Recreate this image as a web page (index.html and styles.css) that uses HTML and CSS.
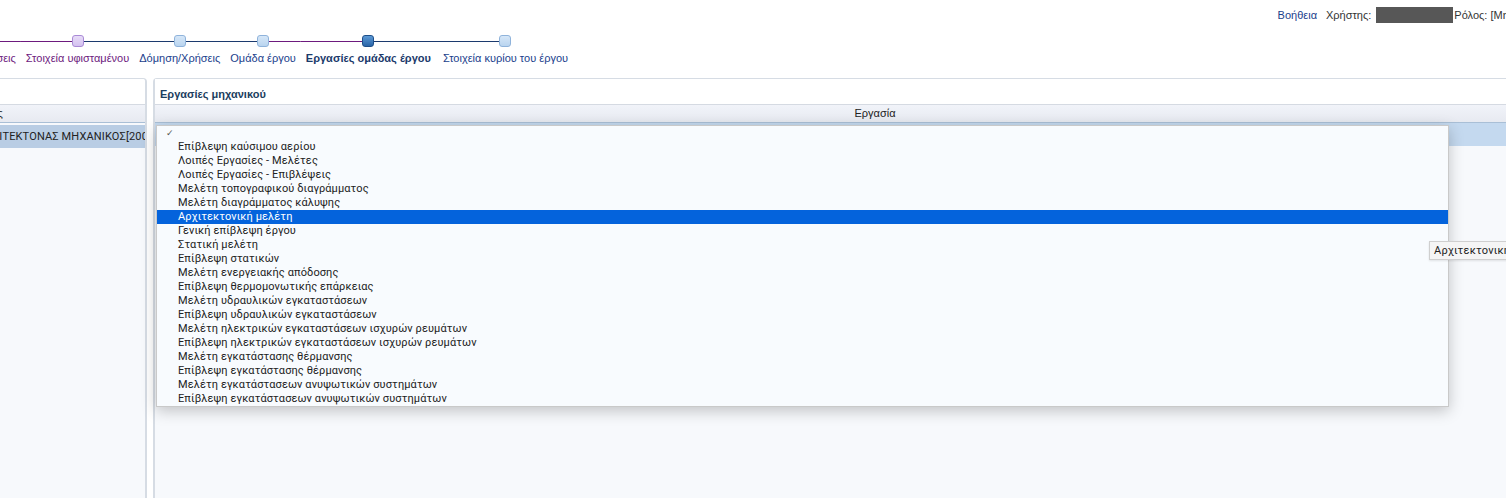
FILE: index.html
```html
<!DOCTYPE html>
<html lang="el">
<head>
<meta charset="utf-8">
<title>Εργασίες ομάδας έργου</title>
<link rel="stylesheet" href="styles.css">
</head>
<body>
<div class="page">
  <div class="topbar">
    <a class="help">Βοήθεια</a>
    <span class="user-label">Χρήστης:</span>
    <span class="user-mask"></span>
    <span class="role">Ρόλος: [Μηχανικός Έργου]</span>
  </div>

  <div class="steps">
    <div class="step s-purple">
      <div class="track tl-purple tr-purple"><span class="node n-purple"></span></div>
      <span class="label">Υφιστάμενες χρήσεις</span>
    </div>
    <div class="step s-purple">
      <div class="track tl-purple tr-navy"><span class="node n-purple"></span></div>
      <span class="label">Στοιχεία υφισταμένου</span>
    </div>
    <div class="step">
      <div class="track tl-navy tr-navy"><span class="node"></span></div>
      <span class="label">Δόμηση/Χρήσεις</span>
    </div>
    <div class="step">
      <div class="track tl-navy tr-purple"><span class="node"></span></div>
      <span class="label">Ομάδα έργου</span>
    </div>
    <div class="step current">
      <div class="track tl-purple tr-navy"><span class="node n-current"></span></div>
      <span class="label">Εργασίες ομάδας έργου</span>
    </div>
    <div class="step last">
      <div class="track tl-navy"><span class="node"></span></div>
      <span class="label">Στοιχεία κυρίου του έργου</span>
    </div>
  </div>

  <div class="main">
    <section class="panel panel-left">
      <div class="panel-head"></div>
      <div class="col-head left-head">Ειδικότητες</div>
      <div class="row selected">ΑΡΧΙΤΕΚΤΟΝΑΣ ΜΗΧΑΝΙΚΟΣ[2005]</div>
    </section>

    <section class="panel panel-right">
      <div class="panel-head"><h2 class="title">Εργασίες μηχανικού</h2></div>
      <div class="col-head center">Εργασία</div>
      <div class="row selected"></div>

      <div class="dropdown">
        <div class="opt check">✓</div>
        <div class="opt">Επίβλεψη καύσιμου αερίου</div>
        <div class="opt">Λοιπές Εργασίες - Μελέτες</div>
        <div class="opt">Λοιπές Εργασίες - Επιβλέψεις</div>
        <div class="opt">Μελέτη τοπογραφικού διαγράμματος</div>
        <div class="opt">Μελέτη διαγράμματος κάλυψης</div>
        <div class="opt hl">Αρχιτεκτονική μελέτη</div>
        <div class="opt">Γενική επίβλεψη έργου</div>
        <div class="opt">Στατική μελέτη</div>
        <div class="opt">Επίβλεψη στατικών</div>
        <div class="opt">Μελέτη ενεργειακής απόδοσης</div>
        <div class="opt">Επίβλεψη θερμομονωτικής επάρκειας</div>
        <div class="opt">Μελέτη υδραυλικών εγκαταστάσεων</div>
        <div class="opt">Επίβλεψη υδραυλικών εγκαταστάσεων</div>
        <div class="opt">Μελέτη ηλεκτρικών εγκαταστάσεων ισχυρών ρευμάτων</div>
        <div class="opt">Επίβλεψη ηλεκτρικών εγκαταστάσεων ισχυρών ρευμάτων</div>
        <div class="opt">Μελέτη εγκατάστασης θέρμανσης</div>
        <div class="opt">Επίβλεψη εγκατάστασης θέρμανσης</div>
        <div class="opt">Μελέτη εγκατάστασεων ανυψωτικών συστημάτων</div>
        <div class="opt">Επίβλεψη εγκατάστασεων ανυψωτικών συστημάτων</div>
      </div>

      <div class="tooltip">Αρχιτεκτονική μελέτη</div>
    </section>
  </div>
</div>
</body>
</html>
```

FILE: styles.css
```css
html, body {
  margin: 0;
  padding: 0;
  overflow: hidden;
  background: #ffffff;
}
body {
  width: 1506px;
  height: 498px;
  font-family: "Liberation Sans", Arial, sans-serif;
  font-size: 11px;
  color: #333;
}
.page {
  width: 1700px;
  margin-left: -100px;
}

/* top bar */
.topbar {
  height: 30px;
  display: flex;
  align-items: center;
  justify-content: flex-end;
  padding-right: 16px;
  font-size: 11px;
}
.help { color: #1a3e8c; margin-right: 9px; }
.user-label { color: #333; margin-right: 5px; }
.user-mask {
  display: inline-block;
  width: 77px;
  height: 16px;
  background: #575757;
  margin-right: 1px;
}
.role { color: #333; white-space: nowrap; }

/* steps */
.steps {
  display: flex;
  height: 48px;
  padding-left: 10px;
}
.step {
  display: flex;
  flex-direction: column;
  align-items: stretch;
  color: #1a3e8c;
}
.step .label {
  padding: 5px 5px 0;
  white-space: nowrap;
  font-size: 11px;
  text-align: center;
}
.step.last .label { padding-left: 7px; padding-right: 7px; }
.step.s-purple { color: #6d1a7e; }
.step.current { color: #1b3a6b; font-weight: bold; }
.track {
  height: 12px;
  margin-top: 5px;
  display: flex;
  justify-content: center;
  --lc: transparent;
  --rc: transparent;
  background: linear-gradient(to right, var(--lc) 50%, var(--rc) 50%) no-repeat center / 100% 1px;
}
.tl-purple { --lc: #6d1a7e; }
.tl-navy { --lc: #1c3a6e; }
.tr-purple { --rc: #6d1a7e; }
.tr-navy { --rc: #1c3a6e; }
.node {
  width: 10px;
  height: 10px;
  border: 1px solid #8fb3db;
  border-radius: 3px;
  background: linear-gradient(#d6e7f8, #b9d4ef);
}
.node.n-purple {
  border-color: #a98ad6;
  background: linear-gradient(#e8dcf8, #d4c1f0);
}
.node.n-current {
  border-color: #1d4f8a;
  background: linear-gradient(#5d9ad6, #2a65a8);
}

/* main */
.main {
  display: flex;
  gap: 6px;
  height: 420px;
}
.panel {
  position: relative;
  background: #f7f9fc;
  border: 1px solid #d6dce4;
  border-bottom: none;
  border-radius: 4px 4px 0 0;
}
.panel-left {
  width: 244px;
  flex-shrink: 0;
  border-right-width: 2px;
  overflow: hidden;
}
.panel-right {
  width: 1440px;
  flex-shrink: 0;
  border-left-width: 2px;
}
.panel-head {
  height: 25px;
  background: #ffffff;
  display: flex;
  align-items: center;
  padding-left: 5px;
}
.title {
  margin: 4px 0 0;
  font-size: 11px;
  font-weight: bold;
  color: #1b3d5e;
}
.col-head {
  height: 17px;
  line-height: 17px;
  border-top: 1px solid #d5dae2;
  border-bottom: 1px solid #a9bfd6;
  background: linear-gradient(#f1f3f9, #e7eaf1);
  color: #222;
  white-space: nowrap;
}
.left-head { padding-left: 47px; }
.col-head.center { text-align: center; }
.row {
  height: 23px;
  line-height: 23px;
  white-space: nowrap;
}
.row.selected { background: #c4d9ef; }
.panel-left .row {
  margin-top: 2px;
  padding-left: 77px;
  overflow: hidden;
  color: #222;
  font-family: Roboto, "Liberation Sans", sans-serif;
  letter-spacing: 0.15px;
}
.panel-left .row.selected { background: #b9cde4; }

/* dropdown */
.dropdown {
  position: absolute;
  left: 1px;
  top: 46px;
  width: 1291px;
  background: #f8fbfe;
  border: 1px solid #c9c9c9;
  box-shadow: 0 4px 14px rgba(0, 0, 0, 0.22);
  font-family: Roboto, "Liberation Sans", sans-serif;
  font-size: 11px;
  letter-spacing: 0.1px;
  color: #222;
}
.opt {
  height: 14px;
  line-height: 14px;
  padding-left: 21px;
  white-space: nowrap;
}
.opt.check {
  padding-left: 9px;
  font-size: 9px;
  color: #555;
}
.opt.hl {
  background: #0463dc;
  color: #fff;
}

/* tooltip */
.tooltip {
  position: absolute;
  left: 1274px;
  top: 162px;
  height: 17px;
  line-height: 17px;
  padding: 0 4px;
  background: #f5f5f5;
  border: 1px solid #cfcfcf;
  font-family: Roboto, "Liberation Sans", sans-serif;
  font-size: 11px;
  letter-spacing: 0.2px;
  color: #222;
  white-space: nowrap;
  box-shadow: 0 1px 2px rgba(0,0,0,0.1);
}
```
